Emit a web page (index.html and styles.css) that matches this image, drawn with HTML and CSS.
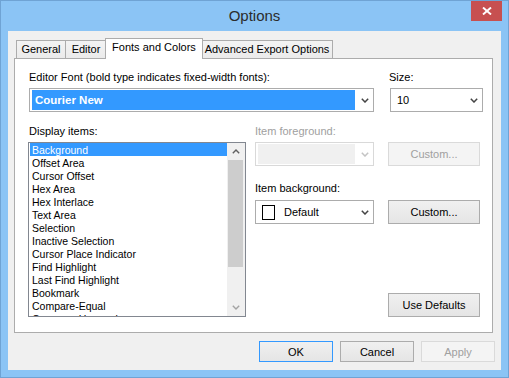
FILE: index.html
```html
<!DOCTYPE html>
<html>
<head>
<meta charset="utf-8">
<title>Options</title>
<link rel="stylesheet" href="styles.css">
</head>
<body>
<div class="window">
  <div class="titlebar">
    <span class="title">Options</span>
    <div class="close">
      <svg width="10" height="8" viewBox="0 0 10 8"><path d="M1 0.5 L9 7.5 M9 0.5 L1 7.5" stroke="#fff" stroke-width="1.9" fill="none"/></svg>
    </div>
  </div>
  <div class="client">
    <div class="tabs">
      <div class="tab tab-general">General</div>
      <div class="tab tab-editor">Editor</div>
      <div class="tab tab-fonts selected">Fonts and Colors</div>
      <div class="tab tab-advanced">Advanced Export Options</div>
    </div>
    <div class="panel">
      <div class="row row-top">
        <div class="font-col">
          <div class="label">Editor Font (bold type indicates fixed-width fonts):</div>
          <div class="combo font-combo">
            <span class="combo-value highlighted">Courier New</span>
            <span class="chev"><svg width="8" height="5" viewBox="0 0 8 5"><path d="M0.8 0.8 L4 4 L7.2 0.8" stroke="#444" stroke-width="1.5" fill="none"/></svg></span>
          </div>
        </div>
        <div class="size-col">
          <div class="label label-size">Size:</div>
          <div class="combo size-combo">
            <span class="combo-value plain">10</span>
            <span class="chev"><svg width="8" height="5" viewBox="0 0 8 5"><path d="M0.8 0.8 L4 4 L7.2 0.8" stroke="#444" stroke-width="1.5" fill="none"/></svg></span>
          </div>
        </div>
      </div>
      <div class="row row-bottom">
        <div class="list-col">
          <div class="label label-list">Display items:</div>
          <div class="listbox">
            <ul class="items">
              <li class="item current">Background</li>
              <li class="item">Offset Area</li>
              <li class="item">Cursor Offset</li>
              <li class="item">Hex Area</li>
              <li class="item">Hex Interlace</li>
              <li class="item">Text Area</li>
              <li class="item">Selection</li>
              <li class="item">Inactive Selection</li>
              <li class="item">Cursor Place Indicator</li>
              <li class="item">Find Highlight</li>
              <li class="item">Last Find Highlight</li>
              <li class="item">Bookmark</li>
              <li class="item">Compare-Equal</li>
              <li class="item">Compare-Unequal</li>
            </ul>
            <div class="scrollbar">
              <div class="sb-btn"><svg width="8" height="5" viewBox="0 0 8 5"><path d="M0.8 4.2 L4 1 L7.2 4.2" stroke="#606060" stroke-width="1.4" fill="none"/></svg></div>
              <div class="sb-track"><div class="sb-thumb"></div></div>
              <div class="sb-btn"><svg width="8" height="5" viewBox="0 0 8 5"><path d="M0.8 0.8 L4 4 L7.2 0.8" stroke="#a3a3a3" stroke-width="1.4" fill="none"/></svg></div>
            </div>
          </div>
        </div>
        <div class="color-col">
          <div class="label disabled-text">Item foreground:</div>
          <div class="pair">
            <div class="combo color-combo disabled">
              <span class="combo-value blank"></span>
              <span class="chev"><svg width="8" height="5" viewBox="0 0 8 5"><path d="M0.8 0.8 L4 4 L7.2 0.8" stroke="#c4c4c4" stroke-width="1.5" fill="none"/></svg></span>
            </div>
            <button class="btn btn-custom" disabled>Custom...</button>
          </div>
          <div class="label label-bg">Item background:</div>
          <div class="pair">
            <div class="combo color-combo">
              <span class="swatch"></span>
              <span class="combo-value default-value">Default</span>
              <span class="chev"><svg width="8" height="5" viewBox="0 0 8 5"><path d="M0.8 0.8 L4 4 L7.2 0.8" stroke="#444" stroke-width="1.5" fill="none"/></svg></span>
            </div>
            <button class="btn btn-custom">Custom...</button>
          </div>
          <button class="btn btn-defaults">Use Defaults</button>
        </div>
      </div>
    </div>
    <div class="footer">
      <button class="btn btn-footer btn-default">OK</button>
      <button class="btn btn-footer">Cancel</button>
      <button class="btn btn-footer" disabled>Apply</button>
    </div>
  </div>
</div>
</body>
</html>
```
FILE: styles.css
```css
* { box-sizing: border-box; }
html, body { margin: 0; padding: 0; }
body {
  width: 509px;
  height: 378px;
  overflow: hidden;
  font-family: "Liberation Sans", Arial, sans-serif;
  font-size: 11px;
  color: #000;
}
.window {
  width: 509px;
  height: 378px;
  background: #8bc4f5;
  border: 1px solid #6fa3d4;
  display: flex;
  flex-direction: column;
}
.titlebar {
  height: 30px;
  flex: none;
  position: relative;
  display: flex;
  align-items: center;
  justify-content: center;
}
.title {
  font-size: 15px;
  color: #2c2c2c;
  margin-top: -2px;
}
.close {
  position: absolute;
  top: 0;
  right: 6px;
  width: 31px;
  height: 20px;
  background: #c75050;
  display: flex;
  align-items: center;
  justify-content: center;
}
.client {
  flex: 1;
  margin: 0 7px 7px;
  background: #f0f0f0;
  padding: 7px 8px 0 6px;
  display: flex;
  flex-direction: column;
}
.tabs {
  display: flex;
  align-items: flex-end;
  height: 20px;
  margin-left: 2px;
  flex: none;
}
.tab {
  height: 18px;
  border: 1px solid #acacac;
  border-bottom: none;
  background: linear-gradient(#f3f3f3, #ebebeb);
  text-align: center;
  line-height: 17px;
  white-space: nowrap;
}
.tab.selected {
  height: 21px;
  margin-bottom: -1px;
  background: #fff;
  position: relative;
  z-index: 2;
  line-height: 17px;
}
.tab-general { width: 50px; }
.tab-editor { width: 42px; margin-left: -1px; }
.tab-fonts { width: 98px; margin-left: -2px; }
.tab-advanced { width: 132px; margin-left: -2px; }
.panel {
  height: 275px;
  flex: none;
  border: 1px solid #acacac;
  background: #fff;
  padding: 11px 0 0 14px;
}
.row { display: flex; }
.row-bottom { margin-top: 12px; }
.label {
  line-height: 15px;
  height: 15px;
  margin-bottom: 3px;
  white-space: nowrap;
}
.label-size { margin-left: -1px; }
.label-list { padding-left: 1px; }
.label-bg { margin-top: 15px; margin-bottom: 4px; }
.disabled-text { color: #a0a0a0; }
.font-col { width: 345px; }
.size-col { margin-left: 16px; }
.combo {
  height: 24px;
  border: 1px solid #acacac;
  background: #fff;
  display: flex;
  align-items: stretch;
  padding: 1px 0 1px 2px;
}
.combo.disabled { border-color: #d9d9d9; }
.combo-value {
  flex: 1;
  display: flex;
  align-items: center;
  white-space: nowrap;
}
.highlighted {
  background: #3399ff;
  color: #fff;
  font-weight: bold;
  font-size: 11.5px;
  padding-left: 3px;
}
.plain { padding-left: 4px; }
.blank { background: #f0f0f0; }
.font-combo { width: 345px; }
.size-combo { width: 93px; }
.chev {
  width: 18px;
  flex: none;
  display: flex;
  align-items: center;
  justify-content: center;
  padding-left: 1px;
  padding-top: 1px;
}
.list-col { margin-left: -1px; width: 218px; }
.listbox {
  width: 218px;
  height: 175px;
  border: 1px solid #828790;
  display: flex;
  background: #fff;
}
.items {
  list-style: none;
  margin: 0;
  padding: 0 0 0 1px;
  flex: 1;
  overflow: hidden;
  font-size: 10.5px;
}
.item {
  height: 13px;
  line-height: 12px;
  padding: 1px 0 0 2px;
  white-space: nowrap;
}
.item.current { background: #3399ff; color: #fff; }
.scrollbar {
  width: 18px;
  flex: none;
  background: #f0f0f0;
  display: flex;
  flex-direction: column;
}
.sb-btn {
  height: 17px;
  flex: none;
  display: flex;
  align-items: center;
  justify-content: center;
}
.sb-track { flex: 1; }
.sb-thumb {
  height: 107px;
  margin: 0 2px 0 1px;
  background: #cdcdcd;
}
.color-col {
  margin-left: 9px;
  width: 225px;
  display: flex;
  flex-direction: column;
}
.pair { display: flex; gap: 14px; }
.color-combo { width: 119px; }
.swatch {
  width: 13px;
  height: 15px;
  border: 1px solid #000;
  background: #fff;
  align-self: center;
  margin-left: 4px;
  flex: none;
}
.default-value { padding-left: 9px; }
.btn {
  font-family: inherit;
  font-size: 11px;
  color: #000;
  border: 1px solid #acacac;
  background: linear-gradient(#f0f0f0, #e5e5e5);
  padding: 0;
  margin: 0;
  border-radius: 0;
}
.btn:disabled {
  color: #a0a0a0;
  background: #f4f4f4;
  border-color: #dadada;
}
.btn-custom { width: 92px; height: 24px; }
.btn-defaults {
  width: 92px;
  height: 24px;
  margin-top: auto;
  align-self: flex-end;
}
.footer {
  display: flex;
  justify-content: flex-end;
  gap: 7px;
  margin-top: 8px;
  margin-right: -2px;
}
.btn-footer { width: 74px; height: 21px; }
.btn-default { border-color: #3399ff; }
```
